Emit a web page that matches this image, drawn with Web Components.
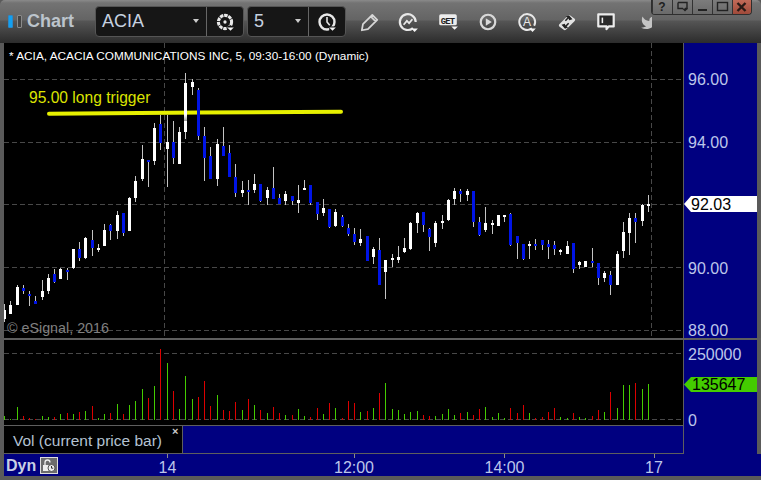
<!DOCTYPE html>
<html><head><meta charset="utf-8"><title>Chart</title>
<style>html,body{margin:0;padding:0;background:#000;overflow:hidden}</style></head>
<body>
<chart-window>
  <title-bar slot="title"></title-bar>
  <price-row slot="body"></price-row>
  <volume-row slot="body"></volume-row>
  <time-axis slot="body"></time-axis>
</chart-window>
<script>
const FONT='"Liberation Sans",Arial,sans-serif';
const X=k=>4+6*k+Math.floor((k+2)/4);
// colour(w/b), high, low, body top, body bottom – page pixel coordinates
const C=`w304 322 310 319|w301 314 305 314|w285 305 287 305|b285 294 288 291|b291 306 294 296|b296 304 301 304|w280 300 291 297|w274 294 278 291|b269 283 274 282|w268 279 269 279|b268 280 270 272|w249 269 249 268|b242 261 249 258|w237 259 238 258|b230 256 240 248|w244 252 248 250|w224 246 230 246|b224 240 225 231|w211 239 215 231|b213 236 213 233|w197 231 198 231|w176 202 181 198|w145 181 159 179|b160 187 160 162|w123 165 128 161|b115 150 124 143|w115 187 142 149|b121 164 142 158|w127 164 132 164|w73 139 83 132|w79 95 82 87|b88 140 90 136|b127 181 136 158|b147 179 156 179|w139 186 144 179|b127 156 146 156|b145 177 153 177|b164 197 177 193|w181 197 190 193|b180 205 190 192|w174 193 184 190|b184 202 184 201|w187 205 190 198|b167 199 188 199|b194 204 198 204|w191 205 194 201|b196 205 196 201|w185 213 200 203|w180 190 188 190|b185 205 185 203|b202 220 202 214|w199 216 208 213|b209 228 209 227|w209 227 212 226|b215 227 217 226|b224 236 228 234|b228 245 234 242|w229 246 239 243|b236 261 236 261|w247 264 249 257|b238 285 250 285|w260 299 260 272|w254 267 258 260|w246 263 257 260|w238 253 248 252|w222 250 223 249|w212 233 213 223|b212 232 212 225|b228 251 229 237|w221 247 223 243|w215 229 221 223|w199 221 200 220|w188 205 191 199|b189 202 191 194|w189 201 191 195|b191 227 191 222|b217 236 222 235|w207 232 223 230|w220 234 223 225|w215 226 215 226|w215 222 215 217|b213 246 214 245|b236 259 236 243|b244 260 244 259|w241 259 244 246|b239 250 244 246|b240 250 240 245|b240 259 244 247|b241 255 245 249|w249 255 250 252|w241 254 246 254|b243 273 243 269|w261 269 262 265|w261 267 261 267|b248 267 261 263|b263 285 263 278|w271 282 273 278|b271 295 275 285|w251 285 254 285|w222 258 232 251|w213 255 218 233|b213 243 218 222|w204 226 205 221|w195 212 204 206`.split('|');
const V='g416 g419 g407 r416 r418 r419 g416 g417 r417 g414 r413 g414 r412 g411 r406 g418 g414 r413 g404 r414 g405 g401 g389 r398 g386 r349 g363 r391 g409 g376 g399 r397 r381 r406 g395 r410 r411 r402 g410 r399 g405 r410 g413 r407 r413 g415 r415 g409 g416 r417 r408 g414 r403 g408 r418 r401 r403 g412 r411 g408 r393 g383 g409 g410 g414 g412 g411 r415 r416 g416 g414 g409 g415 r413 g412 r415 r409 g407 g417 g413 g418 r408 r413 r405 g413 r418 r417 r412 r408 g417 g418 r413 g417 g418 r416 r410 g412 r392 g408 g385 g385 r383 g389 g384'.split(' ');

function def(name,fn){customElements.define(name,class extends HTMLElement{
  constructor(){super();this.attachShadow({mode:'open'}).innerHTML=fn();}
});}

def('chart-window',()=>`<style>
:host{display:flex;flex-direction:column;width:761px;height:480px;box-sizing:border-box;background:#5a5a5a;font-family:${FONT};position:relative;overflow:hidden}
.body{display:flex;flex-direction:column;flex:1;padding:0 0 4px 4px;min-height:0}
</style><slot name="title"></slot><div class="body"><slot name="body"></slot></div>`);

def('title-bar',()=>`<style>
:host{display:flex;align-items:center;height:43px;flex:none;padding-left:8px;box-sizing:border-box;position:relative;
 background:linear-gradient(#8a8a8a 0,#737373 3px,#646464 20px,#555 21px,#2c2c2c 43px);border-radius:5px 5px 0 0}
.led{width:5px;height:13px;border:1px solid #2a88c8;background:#12a0f0;border-radius:1px;box-sizing:border-box;flex:none}
.led.off{background:#444;border-color:#8a8a8a;margin-left:4px}
.name{font:bold 18px ${FONT};color:#bcc4cc;margin-left:5px;width:68px;flex:none}
.tools{display:flex;align-items:center;margin-left:3px;height:100%}
</style>
<div class="led"></div><div class="led off"></div><div class="name">Chart</div>
<combo-box style="width:149px"><span slot="v">ACIA</span><tool-icon slot="i" kind="gear"></tool-icon></combo-box>
<combo-box style="width:99px;margin-left:3px"><span slot="v">5</span><tool-icon slot="i" kind="clock"></tool-icon></combo-box>
<div class="tools">
<tool-icon kind="pencil"></tool-icon><tool-icon kind="replay"></tool-icon><tool-icon kind="get"></tool-icon><tool-icon kind="play"></tool-icon><tool-icon kind="auto"></tool-icon><tool-icon kind="swap"></tool-icon><tool-icon kind="note"></tool-icon><tool-icon kind="bird"></tool-icon>
</div>
<window-buttons></window-buttons>`);

def('combo-box',()=>`<style>
:host{display:flex;height:31px;box-sizing:border-box;background:#161616;border:1px solid #555;border-radius:4px;flex:none;color:#c6d2e0;font:18px ${FONT};align-items:stretch}
.v{flex:1;display:flex;align-items:center;padding-left:6px;position:relative}
.a{position:absolute;right:7px;top:12px;width:0;height:0;border:3.5px solid transparent;border-top:4px solid #ccc;border-bottom:0}
.i{width:36px;border-left:1px solid #666;display:flex;align-items:center;justify-content:center;flex:none}
</style><div class="v"><slot name="v"></slot><i class="a"></i></div><div class="i"><slot name="i"></slot></div>`);

const tri=(x,y)=>`<path d="M${x} ${y}h6l-3 3z" fill="#f4f4f4"/>`;
const ICONS={
gear:`<g fill="none" stroke="#e8e8e8"><circle cx="10" cy="10" r="6" stroke-width="2.8" stroke-dasharray="3.2 .7"/><circle cx="10" cy="10" r="1.5" fill="#e8e8e8" stroke="none"/></g><path d="M12 13.5h7v7h-7z" fill="#161616"/>${tri(12,15)}`,
clock:`<circle cx="10" cy="10" r="6.8" fill="none" stroke="#e8e8e8" stroke-width="2.2"/><path d="M10 5.5V10l2.5 3" fill="none" stroke="#e8e8e8" stroke-width="1.4"/><path d="M12 14h7v6h-7z" fill="#161616"/>${tri(12,15)}`,
pencil:`<path d="M3.5 17.5l1-5.5L13 3.5l4.5 4.5L9 16.500z M11.500 5l4.500 4.500" fill="none" stroke="#d6d6d6" stroke-width="1.6" stroke-linejoin="round"/>`,
replay:`<path d="M14.500 15.500A7.200 7.200 0 1 1 17 10" fill="none" stroke="#e8e8e8" stroke-width="2"/><path d="M6 12.500l3-3.500 2 2 3-3.500" fill="none" stroke="#e8e8e8" stroke-width="1.600"/>${tri(13,16)}`,
get:`<rect x="2" y="3" width="16" height="10" rx="1.5" fill="#ececec"/><text x="10" y="11.4" text-anchor="middle" font-family="Liberation Mono,monospace" font-weight="bold" font-size="8" textLength="13" fill="#222">GET</text>${tri(13,14)}`,
play:`<circle cx="10" cy="10" r="6.600" fill="none" stroke="#d8d8d8" stroke-width="2"/><path d="M8 6.500l5.500 3.500L8 13.500z" fill="#d8d8d8"/>`,
auto:`<path d="M14.500 15.800A7.200 7.200 0 1 1 16.500 13.500" fill="none" stroke="#e8e8e8" stroke-width="1.800"/><text x="10" y="14" text-anchor="middle" font-family="Liberation Sans,sans-serif" font-size="11" fill="#e8e8e8">A</text>${tri(12,16)}`,
swap:`<path d="M3 12l8-8a1.500 1.500 0 0 1 2 0l4 3a1.500 1.500 0 0 1 0 2l-8 8a1.500 1.500 0 0 1-2 0l-4-3a1.500 1.500 0 0 1 0-2z" fill="#e2e2e2"/><path d="M5 12.500l3-1 .6 1.600 2.400-2.400 1 1-2.400 2.400 1.600.6-3 1.400z M15 7.500l-3 1-.6-1.600-2.400 2.400-1-1 2.400-2.400-1.600-.6 3-1.400z" fill="#222"/>`,
note:`<path d="M3 3h14v11h-4.500l-2 2.500V14H3z" fill="#2a2a2a" stroke="#ececec" stroke-width="2" stroke-linejoin="round"/><rect x="6" y="6" width="1.400" height="5" fill="#f0f0f0"/>`,
bird:`<g transform="translate(.3 1.600) scale(.74)"><path d="M23 3a10.900 10.900 0 0 1-3 3 4.480 4.480 0 0 0-7.860 3v1A10.660 10.660 0 0 1 3 4s-4 9 5 13a11.640 11.640 0 0 1-7 2c9 5 20 0 20-11.500a4.500 4.500 0 0 0-.08-.83A7.720 7.720 0 0 0 23 3z" fill="#c4c4c4"/></g>`
};
customElements.define('tool-icon',class extends HTMLElement{
  constructor(){super();this.attachShadow({mode:'open'});}
  connectedCallback(){const k=this.getAttribute('kind'),b=k==='bird',c=this.hasAttribute('slot');
    this.shadowRoot.innerHTML=`<style>:host{display:flex;align-items:center;justify-content:center;flex:none;width:${c?'22px':'39.6px'}}svg{display:block;overflow:hidden}</style>
    <svg width="${b?12:22}" height="${b?20:22}" viewBox="0 0 ${b?12:20} 20">${ICONS[k]}</svg>`;}
});

def('window-buttons',()=>`<style>
:host{position:absolute;right:9px;top:0;display:flex;height:15px;border-radius:0 0 4px 4px;border:1px solid #2e2e2e;border-top:0;box-sizing:border-box;overflow:hidden}
b{width:20px;box-sizing:border-box;display:flex;align-items:center;justify-content:center;background:linear-gradient(#7c7c7c,#6a6a6a);border-left:1px solid #333;color:#1e1e1e;font:bold 12px ${FONT};line-height:13px}
b:first-child{border-left:0;width:19px}
b.x{background:linear-gradient(#c26a58,#a04a3a);width:19.5px}
svg{display:block}
</style>
<b>?</b>
<b><svg width="13" height="12" viewBox="0 0 13 12"><path d="M2 1.500h9v6H9M2 1.500v6h5" fill="none" stroke="#222" stroke-width="1.400"/><path d="M6 7.500h6l-3 3z" fill="#222"/></svg></b>
<b><svg width="13" height="12" viewBox="0 0 13 12"><rect x="2" y="8" width="9" height="2" fill="#222"/></svg></b>
<b><svg width="13" height="12" viewBox="0 0 13 12"><rect x="1.500" y="1.500" width="10" height="8" fill="none" stroke="#222" stroke-width="1.400"/></svg></b>
<b class="x"><svg width="13" height="12" viewBox="0 0 13 12"><path d="M2.500 2l8 8M10.500 2l-8 8" stroke="#2a1a16" stroke-width="2.400"/></svg></b>`);

def('price-row',()=>`<style>:host{display:flex;height:295px;flex:none}</style><price-pane></price-pane><value-axis><axis-tick y="28">96.00</axis-tick><axis-tick y="91">94.00</axis-tick><axis-tick y="153" bg="#fff" h="16" lh="17">92.03</axis-tick><axis-tick y="217">90.00</axis-tick><axis-tick y="279">88.00</axis-tick></value-axis>`);

def('price-pane',()=>{
 let s='';
 for(const y of [79.5,142.5,204.5,267.5,330.5]) s+=`<path d="M4 ${y}H683" stroke="#484848" stroke-dasharray="5 3"/>`;
 for(const x of [164.5,651.5]) s+=`<path d="M${x} 43V338" stroke="#484848" stroke-dasharray="5 3"/>`;
 const line=`<path shape-rendering="auto" d="M49 113.800L200 112.400L341 111.800" stroke="#e6f000" stroke-width="4" stroke-linecap="round" fill="none"/>`;
 let c='';
 C.forEach((d,k)=>{const col=d[0]==='w'?'#fff':'#0014e6',[h,l,t,b]=d.slice(1).split(' ').map(Number),x=X(k);
  c+=`<rect x="${x}" y="${h}" width="1" height="${l-h}" fill="#c4c4c4"/><rect x="${x-1}" y="${t}" width="3" height="${Math.max(b-t,2)}" fill="${col}"/>`;});
 return `<style>
:host{display:block;position:relative;width:680px;height:295px;flex:none;box-sizing:border-box;background:#000;border-right:1px solid #5e5e5e;overflow:hidden;font-family:${FONT}}
svg{display:block}
span{position:absolute;white-space:nowrap}
.leg{left:5px;top:5px;font-size:11.8px;color:#fff;line-height:16px}
.ann{left:25px;top:46px;font-size:15.6px;color:#dce400;line-height:18px}
.wm{left:3px;top:277px;font-size:14.3px;color:#808080;line-height:16px}
</style><svg width="679" height="295" viewBox="4 43 679 295" shape-rendering="crispEdges">${s}${line}${c}<defs><linearGradient id="f" x1="0" y1="0" x2="0" y2="1"><stop offset="0" stop-color="#fff"/><stop offset="1" stop-color="#999"/></linearGradient></defs><rect x="184" y="115" width="3" height="6" fill="url(#f)"/></svg>
<span class="leg">* ACIA, ACACIA COMMUNICATIONS INC, 5, 09:30-16:00 (Dynamic)</span>
<span class="ann">95.00 long trigger</span>
<span class="wm">© eSignal, 2016</span>`;});

def('value-axis',()=>`<style>
:host{display:block;position:relative;flex:none;width:73px;height:100%;background:#000080;font:16px ${FONT};color:#bcc6ea}
</style><slot></slot>`);

customElements.define('axis-tick',class extends HTMLElement{
 constructor(){super();this.attachShadow({mode:'open'});}
 connectedCallback(){const y=this.getAttribute('y'),bg=this.getAttribute('bg'),h=this.getAttribute('h')||16,lh=this.getAttribute('lh')||h;
  this.shadowRoot.innerHTML=bg?`<style>:host{position:absolute;left:0;right:0;top:${y}px;height:${h}px;display:block;background:${bg};color:#000;line-height:${lh}px;padding-left:${this.getAttribute('pad')||7}px;box-sizing:border-box;clip-path:polygon(0 50%,7px 0,100% 0,100% 100%,7px 100%)}</style><slot></slot>`
  :`<style>:host{position:absolute;left:4px;top:${y}px;line-height:18px;display:block;white-space:nowrap}</style><slot></slot>`;}
});

def('volume-row',()=>`<style>
:host{display:flex;height:114px;flex:none;border-top:2px solid #5e5e5e}
.l{display:flex;flex-direction:column;width:680px;flex:none;box-sizing:border-box;border-right:1px solid #5e5e5e}
</style><div class="l"><volume-pane></volume-pane><study-row></study-row></div>
<value-axis><axis-tick y="6">250000</axis-tick><axis-tick y="37" bg="#44cc00" pad="8" h="15" lh="15">135647</axis-tick><axis-tick y="72">0</axis-tick></value-axis>`);

def('volume-pane',()=>{
 let s='';
 for(const y of [353.5,419.5]) s+=`<path d="M4 ${y}H683" stroke="#484848" stroke-dasharray="5 3"/>`;
 V.forEach((d,k)=>{const t=+d.slice(1);s+=`<rect x="${X(k)}" y="${t}" width="1" height="${420-t}" fill="${d[0]==='g'?'#44cc00':'#dc0000'}"/>`;});
 return `<style>:host{display:block;height:85px;flex:none;background:#000;overflow:hidden}svg{display:block}</style>
 <svg width="679" height="85" viewBox="4 340 679 85" shape-rendering="crispEdges">${s}</svg>`;});

def('study-row',()=>`<style>
:host{display:flex;height:29px;flex:none;box-sizing:border-box;border-top:1px solid #5e5e5e;border-bottom:1px solid #5e5e5e;background:#000080}
.lab{width:179px;flex:none;background:#000;border-right:1px solid #5e5e5e;box-sizing:border-box;padding:6px 0 0 9px;color:#b4c2d2;font:15.5px/18px ${FONT};position:relative}
i{font:bold 11px/11px ${FONT};color:#ccc;position:absolute;left:168px;top:0}
</style><div class="lab">Vol (current price bar)<i>×</i></div>`);

def('time-axis',()=>{
 const t=[[167.5,'14'],[354,'12:00'],[504.5,'14:00'],[654,'17']];
 return `<style>
:host{display:block;position:relative;height:22px;flex:none;background:#000080;font:16px ${FONT};color:#bcc6ea}
.t{position:absolute;top:5px;line-height:18px;transform:translateX(-50%);white-space:nowrap}
.k{position:absolute;top:0;width:1px;height:4px;background:#8a8a8a}
.dyn{position:absolute;left:2px;top:2px;display:flex;align-items:center;gap:3px;font:bold 16px/18px ${FONT};color:#c8d0e4}
svg{display:block}
</style>
<div class="dyn"><span style="position:relative;top:1px">Dyn</span><svg width="18" height="17" viewBox="0 0 18 17" style="margin-left:1px"><rect x=".5" y=".5" width="17" height="16" fill="#6c6c6c" stroke="#ddd"/><path d="M5 8V5.500a2.500 2.500 0 0 1 5 0" fill="none" stroke="#eee" stroke-width="1.300"/><rect x="3" y="8" width="6" height="6" fill="#eee"/><circle cx="11.500" cy="11" r="3.500" fill="#eee" stroke="#555"/><path d="M11.500 9v2.200h1.700" fill="none" stroke="#333"/></svg></div>
${t.map(([x,s])=>`<i class="k" style="left:${Math.floor(x)-4}px"></i><span class="t" style="left:${x-4}px">${s}</span>`).join('')}`;});
</script>
</body></html>
